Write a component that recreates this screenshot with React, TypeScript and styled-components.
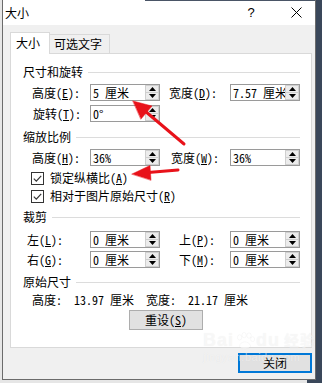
import React from "react";
import styled, { createGlobalStyle } from "styled-components";

const GlobalStyle = createGlobalStyle`
  html, body { margin: 0; padding: 0; }
  body {
    font-family: "Noto Sans Mono CJK SC", "Noto Sans CJK SC", "DejaVu Sans", sans-serif;
    font-size: 12px;
    color: #000;
  }
  * { box-sizing: border-box; }
  u { text-decoration: underline; text-underline-offset: 1px; }
`;

const Screen = styled.div`
  position: relative;
  width: 322px;
  height: 383px;
  overflow: hidden;
  padding-left: 2px;
  background: linear-gradient(to right, #e6e6e6 307px, #3a475a 307px);
`;

const Window = styled.div`
  width: 314px;
  height: 380px;
  border: 1px solid #6b6b6b;
  border-top: none;
  background: #f0f0f0;
  display: flex;
  flex-direction: column;
`;

const TitleBar = styled.div`
  height: 25px;
  flex: none;
  display: flex;
  align-items: center;
  padding-left: 2px;
  background: linear-gradient(#4a5566, #4a5566) 142px 0 / 100% 1px no-repeat, #ffffff;
`;

const TitleText = styled.div`
  flex: 1;
  font-size: 12px;
  line-height: 14px;
`;

const HelpGlyph = styled.div`
  width: 14px;
  margin-right: 19px;
  text-align: center;
  font-family: "Liberation Sans", sans-serif;
  font-size: 13px;
  line-height: 14px;
`;

const CloseGlyph = styled.div`
  width: 38px;
  height: 25px;
  display: flex;
  align-items: center;
  justify-content: center;
`;

const Body = styled.div`
  flex: 1;
  display: flex;
  flex-direction: column;
  padding: 7px 3px 6px 7px;
`;

const TabRow = styled.div`
  display: flex;
  align-items: flex-end;
  margin-bottom: -1px;
  position: relative;
  z-index: 1;
`;

const Tab = styled.div<{ $active?: boolean }>`
  height: ${(p) => (p.$active ? "22px" : "19px")};
  width: ${(p) => (p.$active ? "40px" : "60px")};
  margin-bottom: ${(p) => (p.$active ? "0" : "1px")};
  padding-left: ${(p) => (p.$active ? "5px" : "4px")};
  background: ${(p) => (p.$active ? "#ffffff" : "#f0f0f0")};
  border: 1px solid #d9d9d9;
  border-bottom: none;
  border-left: ${(p) => (p.$active ? "1px solid #d9d9d9" : "none")};
  font-size: 12px;
  line-height: ${(p) => (p.$active ? "20px" : "17px")};
  white-space: nowrap;
`;

const Panel = styled.div`
  height: 295px;
  flex: none;
  background: #ffffff;
  border: 1px solid #d9d9d9;
  padding: 10px 11px 0 12px;
  display: flex;
  flex-direction: column;
`;

const SectionHeader = styled.div<{ $mt?: number }>`
  display: flex;
  align-items: center;
  height: 16px;
  line-height: 16px;
  margin-top: ${(p) => p.$mt ?? 0}px;
  white-space: nowrap;
`;

const Rule = styled.div`
  flex: 1;
  height: 1px;
  margin-left: 5px;
  background: #dcdcdc;
`;

const FieldRow = styled.div<{ $mt?: number }>`
  display: grid;
  grid-template-columns: 63px 70px 9px 61px 70px;
  height: 17px;
  align-items: center;
  margin-left: 4px;
  margin-top: ${(p) => p.$mt ?? 0}px;
`;

const Label = styled.div<{ $indent?: number; $col?: number }>`
  grid-column: ${(p) => p.$col ?? 1};
  padding-left: ${(p) => p.$indent ?? 0}px;
  white-space: nowrap;
  line-height: 16px;
`;

const InputBox = styled.div<{ $col?: number }>`
  grid-column: ${(p) => p.$col ?? 2};
  height: 17px;
  border: 1px solid #9a9a9a;
  background: #ffffff;
  display: flex;
`;

const InputValue = styled.div`
  flex: 1;
  min-width: 0;
  padding-left: 2px;
  overflow: hidden;
  white-space: pre;
  line-height: 15px;
`;

const Spinner = styled.div`
  width: 14px;
  flex: none;
  display: flex;
  flex-direction: column;
  gap: 1px;
  padding: 1px;
  background: #cfcfcf;
`;

const SpinHalf = styled.div`
  flex: 1;
  background: #ececec;
  display: flex;
  align-items: center;
  justify-content: center;
`;

const CheckRow = styled.div<{ $mt?: number }>`
  display: flex;
  align-items: center;
  gap: 6px;
  height: 18px;
  margin-left: 8px;
  margin-top: ${(p) => p.$mt ?? 0}px;
  white-space: nowrap;
  line-height: 16px;
`;

const CheckBox = styled.div`
  width: 13px;
  height: 13px;
  border: 1px solid #333333;
  background: #ffffff;
  display: flex;
  align-items: center;
  justify-content: center;
`;

const InfoRow = styled.div`
  height: 16px;
  line-height: 16px;
  margin-left: 9px;
  margin-top: 2px;
  white-space: pre;
`;

const PushButton = styled.div<{ $default?: boolean }>`
  width: 74px;
  height: 20px;
  background: #e1e1e1;
  border: ${(p) => (p.$default ? "2px solid #0078d7" : "1px solid #adadad")};
  display: flex;
  align-items: center;
  justify-content: center;
  line-height: 16px;
  white-space: nowrap;
`;

const ResetButton = styled(PushButton)`
  margin-left: 106px;
  margin-top: 2px;
`;

const Footer = styled.div`
  display: flex;
  justify-content: flex-end;
  margin-top: 5px;
`;

const Overlay = styled.svg`
  position: absolute;
  left: 0;
  top: 0;
  width: 322px;
  height: 383px;
  pointer-events: none;
`;

const Watermark = styled.div`
  position: absolute;
  left: 203px;
  top: 330px;
  display: flex;
  flex-direction: column;
  color: rgba(255, 255, 255, 0.55);
  text-shadow: 0 0 1px rgba(0, 0, 0, 0.07);
  pointer-events: none;
`;

const WatermarkLogo = styled.div`
  display: flex;
  align-items: flex-end;
  font-family: "Liberation Sans", sans-serif;
  font-weight: bold;
  font-size: 18px;
  line-height: 20px;
  letter-spacing: 1px;
`;

const WatermarkCn = styled.span`
  font-family: "Noto Sans CJK SC", sans-serif;
  font-size: 15px;
  line-height: 20px;
  margin-left: 4px;
`;

const WatermarkUrl = styled.div`
  font-family: "Liberation Sans", sans-serif;
  font-size: 11px;
  line-height: 12px;
  letter-spacing: 0.5px;
  margin-top: 1px;
`;

const Up = () => (
  <svg width="7" height="4" viewBox="0 0 7 4">
    <polygon points="0,4 7,4 3.5,0" fill="#000" />
  </svg>
);
const Down = () => (
  <svg width="7" height="4" viewBox="0 0 7 4">
    <polygon points="0,0 7,0 3.5,4" fill="#000" />
  </svg>
);

const SpinField: React.FC<{ value: string; col?: number }> = ({ value, col }) => (
  <InputBox $col={col}>
    <InputValue>{value}</InputValue>
    <Spinner>
      <SpinHalf>
        <Up />
      </SpinHalf>
      <SpinHalf>
        <Down />
      </SpinHalf>
    </Spinner>
  </InputBox>
);

const Check: React.FC<{ children: React.ReactNode; mt?: number }> = ({ children, mt }) => (
  <CheckRow $mt={mt}>
    <CheckBox>
      <svg width="11" height="11" viewBox="0 0 11 11">
        <path d="M1.8 5.6 L4.3 8.1 L9.2 2.8" fill="none" stroke="#333" strokeWidth="1.2" />
      </svg>
    </CheckBox>
    <span>{children}</span>
  </CheckRow>
);

export default function App() {
  return (
    <>
      <GlobalStyle />
      <Screen>
        <Window>
          <TitleBar>
            <TitleText>大小</TitleText>
            <HelpGlyph>?</HelpGlyph>
            <CloseGlyph>
              <svg width="11" height="11" viewBox="0 0 11 11">
                <path d="M0.5 0.5 L10.5 10.5 M10.5 0.5 L0.5 10.5" stroke="#000" strokeWidth="1" />
              </svg>
            </CloseGlyph>
          </TitleBar>
          <Body>
            <TabRow>
              <Tab $active>大小</Tab>
              <Tab>可选文字</Tab>
            </TabRow>
            <Panel>
              <SectionHeader>
                尺寸和旋转<Rule />
              </SectionHeader>
              <FieldRow $mt={4}>
                <Label $indent={5}>
                  高度(<u>E</u>):
                </Label>
                <SpinField value="5 厘米" />
                <Label $col={4} $indent={0}>
                  宽度(<u>D</u>):
                </Label>
                <SpinField value="7.57 厘米" col={5} />
              </FieldRow>
              <FieldRow $mt={4}>
                <Label $indent={6}>
                  旋转(<u>T</u>):
                </Label>
                <SpinField value="0°" />
              </FieldRow>

              <SectionHeader $mt={7}>
                缩放比例<Rule />
              </SectionHeader>
              <FieldRow $mt={4}>
                <Label $indent={5}>
                  高度(<u>H</u>):
                </Label>
                <SpinField value="36%" />
                <Label $col={4} $indent={2}>
                  宽度(<u>W</u>):
                </Label>
                <SpinField value="36%" col={5} />
              </FieldRow>
              <Check mt={3}>
                锁定纵横比(<u>A</u>)
              </Check>
              <Check>
                相对于图片原始尺寸(<u>R</u>)
              </Check>

              <SectionHeader $mt={4}>
                裁剪<Rule />
              </SectionHeader>
              <FieldRow $mt={6}>
                <Label $indent={0}>
                  左(<u>L</u>):
                </Label>
                <SpinField value="0 厘米" />
                <Label $col={4} $indent={10}>
                  上(<u>P</u>):
                </Label>
                <SpinField value="0 厘米" col={5} />
              </FieldRow>
              <FieldRow $mt={3}>
                <Label $indent={0}>
                  右(<u>G</u>):
                </Label>
                <SpinField value="0 厘米" />
                <Label $col={4} $indent={10}>
                  下(<u>M</u>):
                </Label>
                <SpinField value="0 厘米" col={5} />
              </FieldRow>

              <SectionHeader $mt={6}>
                原始尺寸<Rule />
              </SectionHeader>
              <InfoRow>{"高度:  13.97 厘米  宽度:  21.17 厘米"}</InfoRow>
              <ResetButton>
                重设(<u>S</u>)
              </ResetButton>
            </Panel>
            <Footer>
              <PushButton $default>关闭</PushButton>
            </Footer>
          </Body>
        </Window>

        <Watermark>
          <WatermarkLogo>
            Bai
            <svg width="22" height="18" viewBox="0 0 24 20">
              <g fill="rgba(255,255,255,0.55)" stroke="rgba(0,0,0,0.06)" strokeWidth="0.6">
                <ellipse cx="6" cy="6" rx="2.4" ry="3" />
                <ellipse cx="11" cy="3.5" rx="2.4" ry="3" />
                <ellipse cx="16.5" cy="4" rx="2.4" ry="3" />
                <ellipse cx="20.5" cy="8" rx="2.2" ry="2.8" />
                <path d="M6 16 C6 10 16 9 18 15 C19 19 8 20 6 16 Z" />
              </g>
            </svg>
            du
            <WatermarkCn>经验</WatermarkCn>
          </WatermarkLogo>
          <WatermarkUrl>jingyan.baidu.com</WatermarkUrl>
        </Watermark>

        <Overlay viewBox="0 0 322 383">
          <g fill="#e8121a" stroke="#e8121a" strokeLinecap="round">
            <line x1="184" y1="144" x2="145" y2="111" strokeWidth="3" />
            <polygon points="133,101 152,106 141,119" strokeWidth="0.5" />
            <line x1="178" y1="170" x2="148" y2="172.6" strokeWidth="3" />
            <polygon points="132,174 150,165.5 151,180" strokeWidth="0.5" />
          </g>
        </Overlay>
      </Screen>
    </>
  );
}
